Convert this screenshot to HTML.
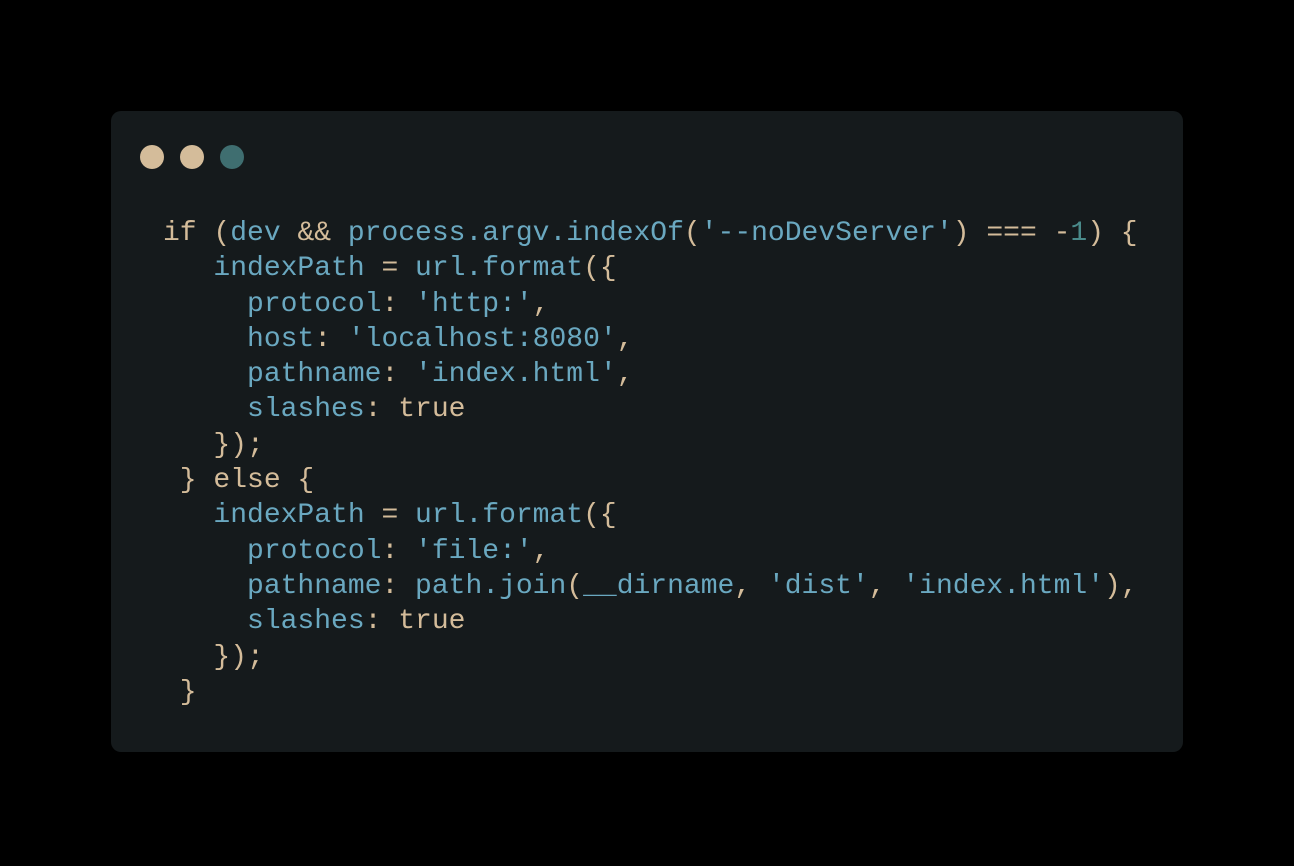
<!DOCTYPE html>
<html><head><style>
html,body{margin:0;padding:0;background:#000;width:1294px;height:866px;overflow:hidden}
.card{position:absolute;left:111px;top:111px;width:1072px;height:641px;background:#151a1c;border-radius:10px}
.dot{position:absolute;top:145px;width:24px;height:24px;border-radius:50%}
pre{position:absolute;left:163px;top:216px;margin:0;font-family:"Liberation Mono",monospace;font-size:28px;line-height:35.3px;letter-spacing:0px;color:#6aa8c0;white-space:pre}
.t{color:#d4bc9a}.n{color:#4a8a8a}
</style></head><body>
<div class="card"></div>
<div class="dot" style="left:140px;background:#d4bc9a"></div>
<div class="dot" style="left:180px;background:#d4bc9a"></div>
<div class="dot" style="left:220px;background:#3f6e70"></div>
<pre><span class="t">if (</span>dev <span class="t">&amp;&amp;</span> process.argv.indexOf<span class="t">(</span>'--noDevServer'<span class="t">) === -</span><span class="n">1</span><span class="t">) {</span>
   indexPath <span class="t">=</span> url.format<span class="t">({</span>
     protocol<span class="t">:</span> 'http:'<span class="t">,</span>
     host<span class="t">:</span> 'localhost:8080'<span class="t">,</span>
     pathname<span class="t">:</span> 'index.html'<span class="t">,</span>
     slashes<span class="t">: true</span>
<span class="t">   });</span>
<span class="t"> } else {</span>
   indexPath <span class="t">=</span> url.format<span class="t">({</span>
     protocol<span class="t">:</span> 'file:'<span class="t">,</span>
     pathname<span class="t">:</span> path.join<span class="t">(</span>__dirname<span class="t">,</span> 'dist'<span class="t">,</span> 'index.html'<span class="t">),</span>
     slashes<span class="t">: true</span>
<span class="t">   });</span>
<span class="t"> }</span></pre>
</body></html>
